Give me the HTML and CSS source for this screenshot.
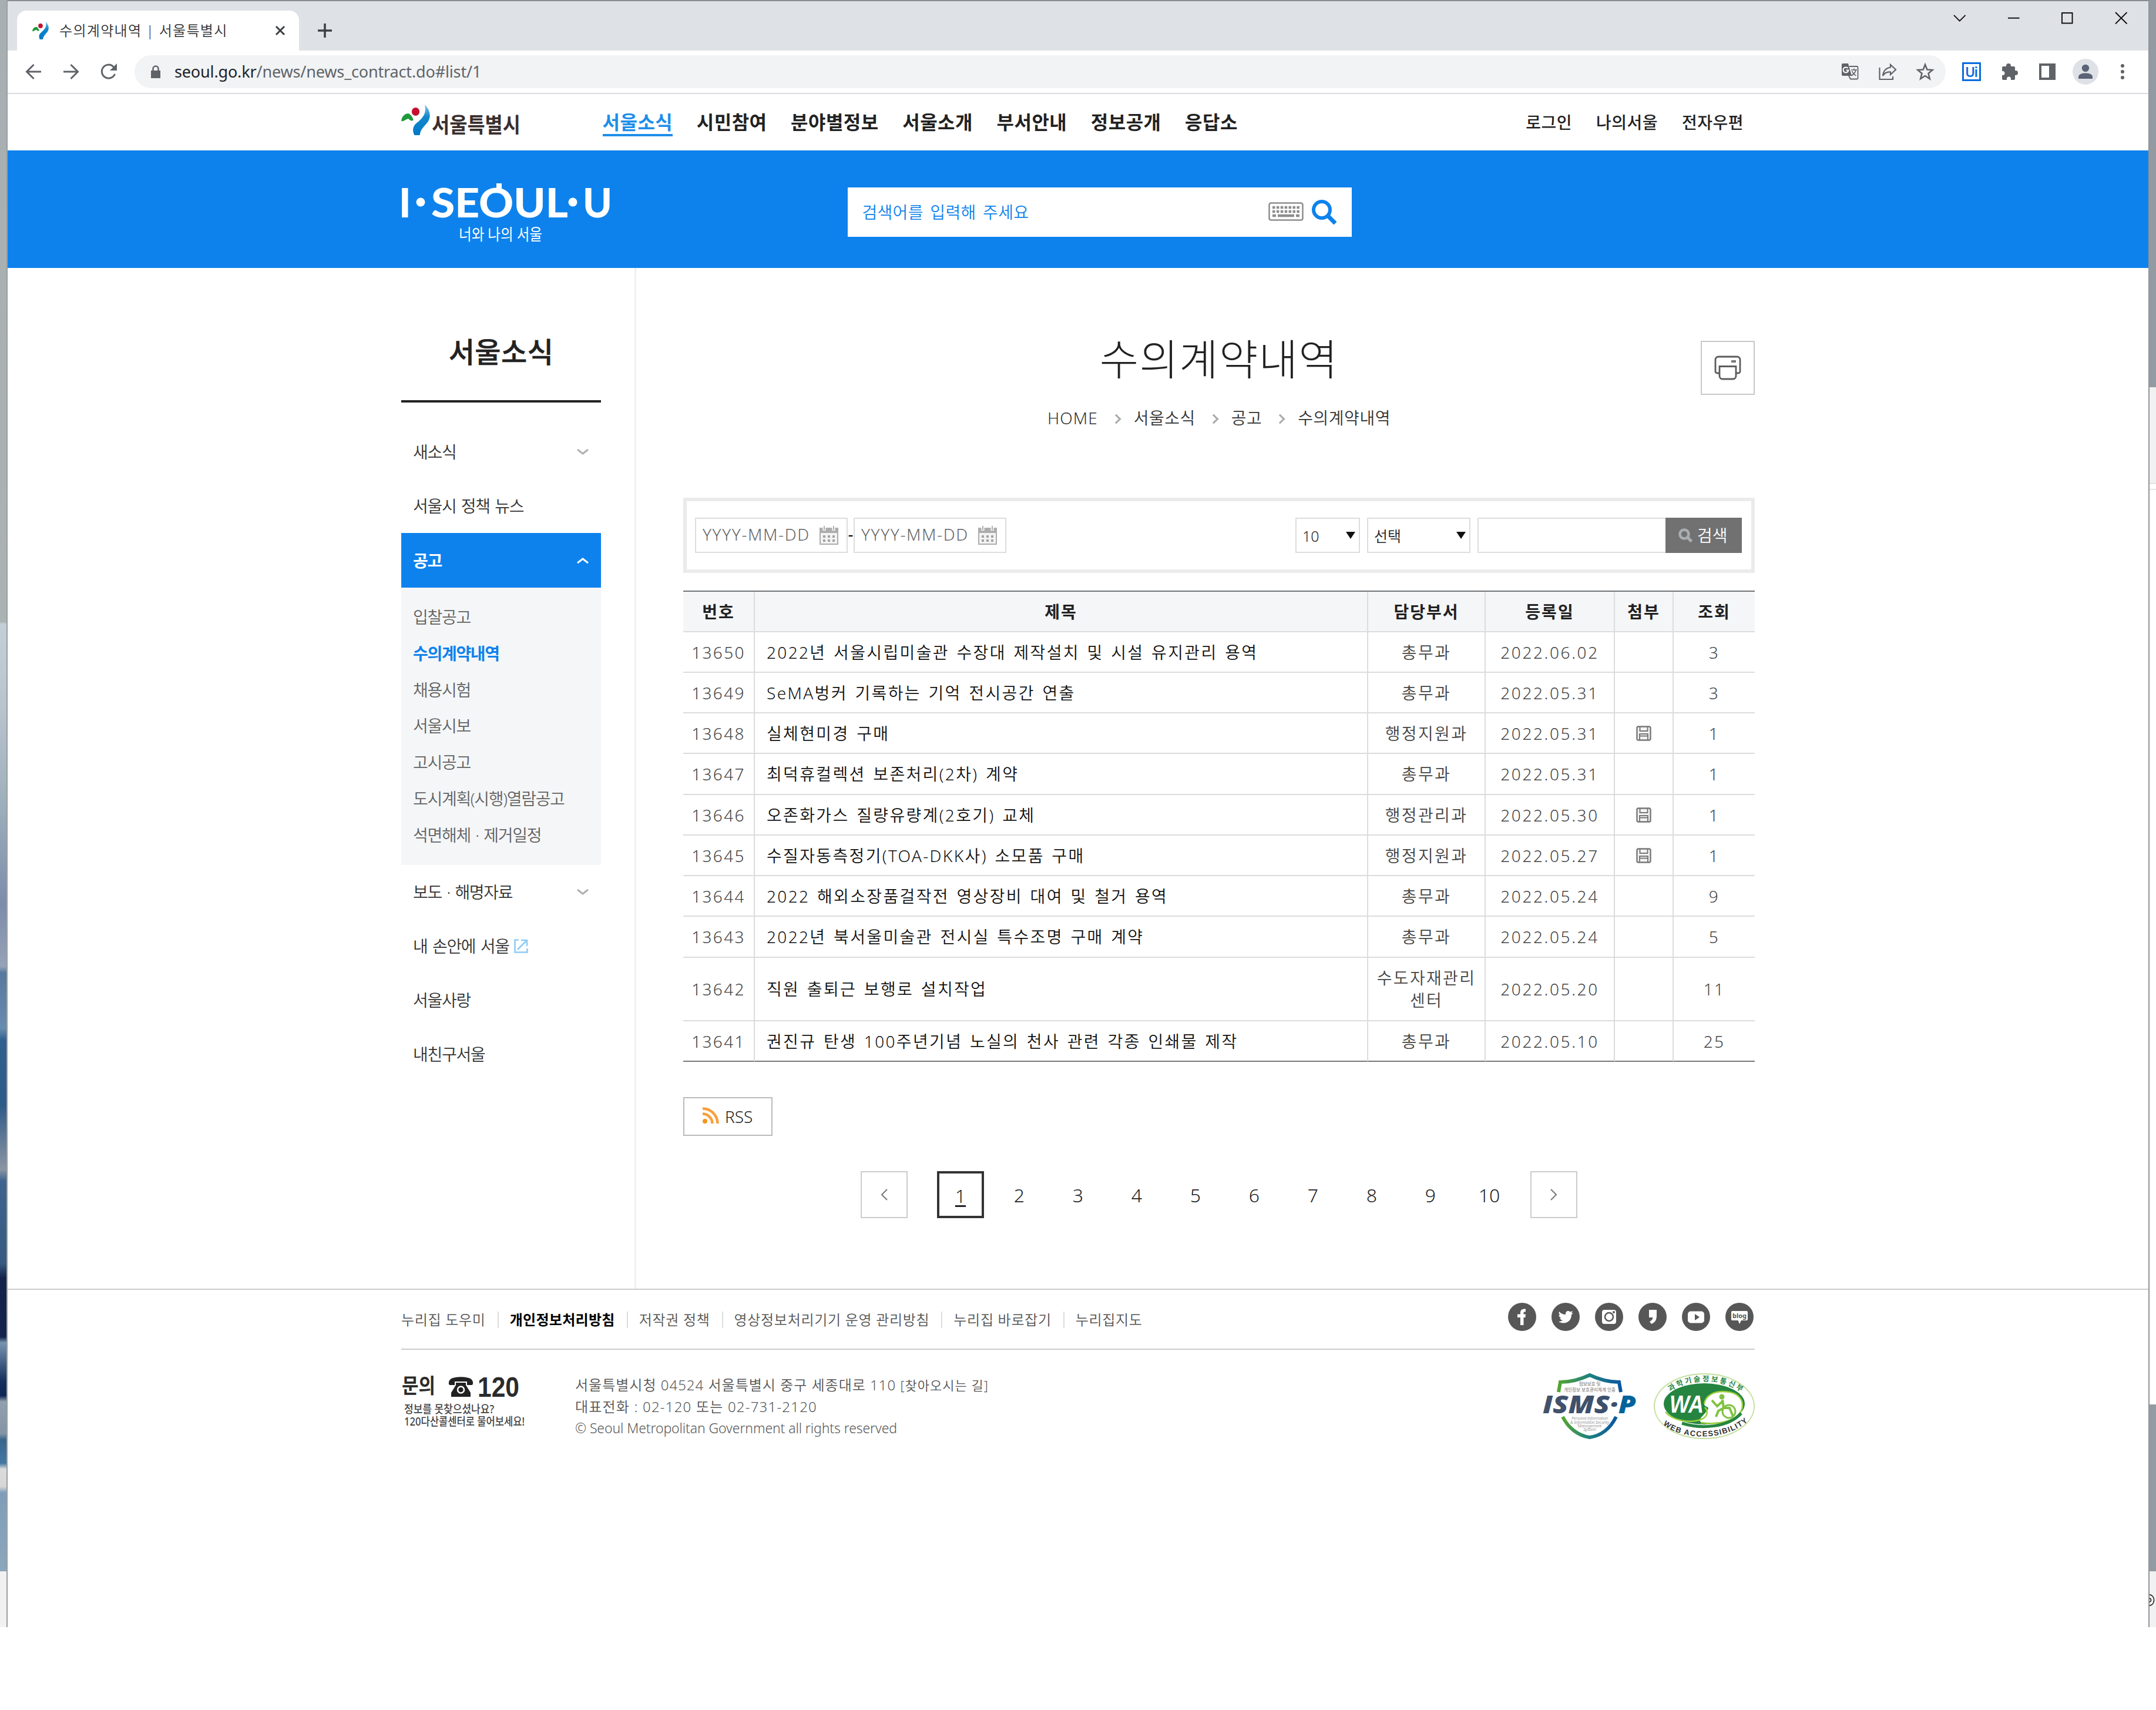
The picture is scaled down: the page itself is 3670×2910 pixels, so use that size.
FILE: index.html
```html
<!DOCTYPE html>
<html lang="ko">
<head>
<meta charset="utf-8">
<title>수의계약내역 | 서울특별시</title>
<link rel="stylesheet" href="styles.css">
</head>
<body>
<svg width="0" height="0" class="defs">
  <defs>
    <linearGradient id="blueSwoosh" x1="0" y1="1" x2="0" y2="0"><stop offset="0" stop-color="#0079c8"/><stop offset=".6" stop-color="#1387cd"/><stop offset="1" stop-color="#8cc6ea"/></linearGradient>
    <linearGradient id="shieldGrad" x1="0" x2="1"><stop offset="0" stop-color="#55a532"/><stop offset=".5" stop-color="#1f8080"/><stop offset="1" stop-color="#0b57a0"/></linearGradient>
    <linearGradient id="ismsGrad" gradientUnits="userSpaceOnUse" x1="0" y1="0" x2="158" y2="0"><stop offset="0" stop-color="#42526b"/><stop offset=".78" stop-color="#3b4f6c"/><stop offset=".82" stop-color="#00639c"/></linearGradient>
  </defs>
  <symbol id="seoulMark" viewBox="0 0 48 52">
    <path d="M39 0C49 10 50 21 44 30C37 39 32 42 31 52H22C18 44 19 37 26 31C36 23 43 14 39 0Z" fill="url(#blueSwoosh)"/>
    <path d="M0 28C1 19 7 15 12 15C18 18 20 24 20 27C17 28 14 27 12 24C9 24 5 29 0 28Z" fill="#1f9a3c"/>
    <ellipse cx="24" cy="12" rx="6.5" ry="7" fill="#c60f2f"/>
  </symbol>
  <symbol id="floppy" viewBox="0 0 26 26">
    <path d="M3 1.5H23L24.5 3V23L23 24.500H3L1.500 23V3Z" fill="#f4f4f4" stroke="#777" stroke-width="2.4"/>
    <path d="M6.500 2V9H19.500V2M6 24V14H20V24M6 17.500H20" fill="none" stroke="#777" stroke-width="2"/>
  </symbol>
  <symbol id="calendar" viewBox="0 0 32 32">
    <path d="M1 4H31V31H1Z" fill="#f3f3f3" stroke="#adadad" stroke-width="2"/>
    <path d="M0 3H32V12H0Z" fill="#adadad"/>
    <path d="M8 0V8M24 0V8" stroke="#fff" stroke-width="5"/><path d="M8 0V7M24 0V7" stroke="#adadad" stroke-width="2"/>
    <path d="M6 18H10M14 18H18M22 18H26M6 25H10M14 25H18M22 25H26" stroke="#a2a2a2" stroke-width="4"/>
  </symbol>
</svg>
<div class="desktop">
  <div class="strip strip-left"></div>
  <div class="window">
    <div class="tabbar">
      <div class="tab">
        <svg class="tab-mark" viewBox="0 0 48 52" preserveAspectRatio="none"><use href="#seoulMark"/></svg>
        <span class="tab-title">수의계약내역 | 서울특별시</span>
        <svg class="tab-close" viewBox="0 0 18 18"><path d="M2 2L16 16M16 2L2 16" stroke="#3c4043" stroke-width="3"/></svg>
      </div>
      <svg class="new-tab" viewBox="0 0 24 24"><path d="M12 0V24M0 12H24" stroke="#3c4043" stroke-width="3.500"/></svg>
      <div class="win-controls">
        <svg viewBox="0 0 22 22"><path d="M1 6L11 16L21 6" fill="none" stroke="#111" stroke-width="2"/></svg>
        <svg viewBox="0 0 22 22"><path d="M1 11H21" stroke="#111" stroke-width="2"/></svg>
        <svg viewBox="0 0 22 22"><path d="M2 2H20V20H2Z" fill="none" stroke="#111" stroke-width="2"/></svg>
        <svg viewBox="0 0 22 22"><path d="M1 1L21 21M21 1L1 21" stroke="#111" stroke-width="2"/></svg>
      </div>
    </div>
    <div class="toolbar">
      <svg class="nav-ic" viewBox="0 0 28 28"><path d="M27 14H3M14.500 2L2.500 14L14.500 26" fill="none" stroke="#5f6368" stroke-width="3"/></svg>
      <svg class="nav-ic" viewBox="0 0 28 28"><path d="M1 14H25M13.500 2L25.500 14L13.500 26" fill="none" stroke="#5f6368" stroke-width="3"/></svg>
      <svg class="nav-ic" viewBox="0 0 28 28"><path d="M24.500 18A11.500 11.500 0 1 1 22 5.500L25 9" fill="none" stroke="#5f6368" stroke-width="3"/><path d="M28 0V12H16Z" fill="#5f6368"/></svg>
      <div class="omnibox">
        <svg class="lock" viewBox="0 0 18 22"><path d="M1 9H17V22H1Z" fill="#5f6368"/><path d="M4.500 9V6A4.500 4.500 0 0 1 13.500 6V9" fill="none" stroke="#5f6368" stroke-width="2.500"/></svg>
        <span class="url"><b>seoul.go.kr</b>/news/news_contract.do#list/1</span>
        <div class="omni-icons">
          <svg viewBox="0 0 30 30"><path d="M14 6H27A1.500 1.500 0 0 1 28.500 7.500V26A1.500 1.500 0 0 1 27 27.500H16L13 22" fill="none" stroke="#5f6368" stroke-width="1.800"/><path d="M3 1H12L18 22H3A2 2 0 0 1 1 20V3A2 2 0 0 1 3 1Z" fill="#5f6368"/><path d="M11.500 9A4.500 4.500 0 1 0 12.500 12.500H8.500" fill="none" stroke="#fff" stroke-width="2"/><path d="M17 12H27M22 9.500V12M25 12C24 17 21 20 17 22M18.500 14C20 18 23 20 25 22" fill="none" stroke="#5f6368" stroke-width="1.600"/></svg>
          <svg viewBox="0 0 30 30"><path d="M1.500 8V28H24V23" fill="none" stroke="#5f6368" stroke-width="2.200"/><path d="M20 3L29 11.500L20 20V15.500C14 15 10 17 7 22C8 13 13 8.500 20 7.500Z" fill="none" stroke="#5f6368" stroke-width="2.200"/></svg>
          <svg viewBox="0 0 30 30"><path d="M15 3L18.400 11.500L27.500 12L20.500 18L22.800 27L15 22L7.200 27L9.500 18L2.500 12L11.600 11.500Z" fill="none" stroke="#5f6368" stroke-width="2.600"/></svg>
        </div>
      </div>
      <div class="ext-icons">
        <svg class="ui" viewBox="0 0 32 32"><path d="M1.500 1.500H30.500V30.500H1.500Z" fill="#fff" stroke="#0a6be0" stroke-width="3"/><text x="16" y="24.500" text-anchor="middle" textLength="22" font-size="23" font-weight="600" fill="#0a6be0">Ui</text></svg>
        <svg viewBox="0 0 30 30"><path d="M2 8A2 2 0 0 1 4 6H9V5A4 4 0 0 1 17 5V6H22A2 2 0 0 1 24 8V13H25A4 4 0 0 1 25 21H24V27A2 2 0 0 1 22 29H17V27A3.500 3.500 0 0 0 10 27V29H4A2 2 0 0 1 2 27V21H3A3.500 3.500 0 0 0 3 14H2Z" fill="#5f6368"/></svg>
        <svg viewBox="0 0 30 30"><path d="M1 1H29V29H1ZM5 5V25H18V5Z" fill="#5f6368" fill-rule="evenodd"/></svg>
        <svg class="avatar" viewBox="0 0 44 44"><circle cx="22" cy="22" r="22" fill="#dee1e6"/><circle cx="22" cy="16" r="6.200" fill="#5a6378"/><path d="M10 34V31C10 26 16 24.500 22 24.500S34 26 34 31V34Z" fill="#5a6378"/></svg>
        <svg class="dots" viewBox="0 0 6 28"><circle cx="3" cy="4" r="3" fill="#5f6368"/><circle cx="3" cy="14" r="3" fill="#5f6368"/><circle cx="3" cy="24" r="3" fill="#5f6368"/></svg>
      </div>
    </div>

    <header class="site-header wrap">
      <div class="logo">
        <svg class="logo-mark" viewBox="0 0 48 52" preserveAspectRatio="none"><use href="#seoulMark"/></svg>
        <svg class="logo-text" viewBox="0 0 152 54"><text x="0" y="47.500" font-size="36" font-weight="700" fill="#3a2f2e" textLength="151" lengthAdjust="spacingAndGlyphs">서울특별시</text></svg>
      </div>
      <nav class="gnb"><a class="on">서울소식</a><a>시민참여</a><a>분야별정보</a><a>서울소개</a><a>부서안내</a><a>정보공개</a><a>응답소</a></nav>
      <nav class="util"><a>로그인</a><a>나의서울</a><a>전자우편</a></nav>
    </header>

    <div class="banner">
      <div class="wrap banner-in">
        <svg class="slogan" viewBox="0 0 360 110">
          <g fill="#fff" font-weight="900" font-size="68" class="slogan-text"><text x="-4" y="60">I</text><text x="51" y="60" textLength="233" lengthAdjust="spacingAndGlyphs">SEOUL</text><text x="309" y="60" textLength="50" lengthAdjust="spacingAndGlyphs">U</text></g>
          <circle cx="33" cy="34" r="7.500" fill="#fff"/><circle cx="292" cy="34" r="7.500" fill="#fff"/><path d="M162 2H171V14H162Z" fill="#fff"/>
          <text x="98" y="99" font-size="27" fill="#fff" textLength="142" lengthAdjust="spacingAndGlyphs">너와 나의 서울</text>
        </svg>
        <div class="search">
          <span>검색어를 입력해 주세요</span>
          <svg class="kbd" viewBox="0 0 60 32"><rect x="1.500" y="1.500" width="57" height="29" rx="3" fill="#fff" stroke="#8d8d8d" stroke-width="2.500"/><path d="M7 9H53M7 16H53" stroke="#8d8d8d" stroke-width="4.500" stroke-dasharray="4.500 2.400"/><path d="M7 23H13M16 23H44M47 23H53" stroke="#8d8d8d" stroke-width="4.500"/></svg>
          <svg class="mag" viewBox="0 0 44 44"><circle cx="18" cy="18" r="14" fill="none" stroke="#0e82ec" stroke-width="6"/><path d="M28 28L41 41" stroke="#0e82ec" stroke-width="7"/></svg>
        </div>
      </div>
    </div>

    <div class="body wrap">
      <aside class="side">
        <h2>서울소식</h2>
        <ul class="lnb">
          <li>새소식<svg class="chev" viewBox="0 0 20 12"><path d="M1 2L10 9L19 2" fill="none" stroke="#b0b0b0" stroke-width="3"/></svg></li>
          <li>서울시 정책 뉴스</li>
          <li class="on">공고<svg class="chev" viewBox="0 0 20 12"><path d="M1 10L10 3L19 10" fill="none" stroke="#fff" stroke-width="3"/></svg></li>
        </ul>
        <ul class="sub"><li>입찰공고</li><li class="on">수의계약내역</li><li>채용시험</li><li>서울시보</li><li>고시공고</li><li>도시계획(시행)열람공고</li><li>석면해체 · 제거일정</li></ul>
        <ul class="lnb">
          <li>보도 · 해명자료<svg class="chev" viewBox="0 0 20 12"><path d="M1 2L10 9L19 2" fill="none" stroke="#b0b0b0" stroke-width="3"/></svg></li>
          <li>내 손안에 서울<svg class="ext" viewBox="0 0 24 24"><path d="M8 1.500H1.500V22.500H22.500V16M6 18L21 3M12 2H22V12" fill="none" stroke="#8fcbf7" stroke-width="2.600"/></svg></li>
          <li>서울사랑</li>
          <li>내친구서울</li>
        </ul>
      </aside>
      <main class="main">
        <div class="title-row">
          <h1>수의계약내역</h1>
          <div class="crumbs"><span class="home">HOME</span><i></i><span>서울소식</span><i></i><span>공고</span><i></i><span>수의계약내역</span></div>
          <div class="print"><svg viewBox="0 0 46 42"><path d="M9 30H5A3 3 0 0 1 2 27V7A5 5 0 0 1 7 2H39A5 5 0 0 1 44 7V27A3 3 0 0 1 41 30H37" fill="none" stroke="#5c5c5c" stroke-width="2.800"/><path d="M9 18.500H37V35A5 5 0 0 1 32 40H14A5 5 0 0 1 9 35Z" fill="#fff" stroke="#5c5c5c" stroke-width="2.800"/><path d="M29 10H37" stroke="#777" stroke-width="4"/></svg></div>
        </div>
        <form class="filter">
          <div class="date"><span>YYYY-MM-DD</span><svg viewBox="0 0 32 32"><use href="#calendar"/></svg></div>
          <em>-</em>
          <div class="date"><span>YYYY-MM-DD</span><svg viewBox="0 0 32 32"><use href="#calendar"/></svg></div>
          <div class="sel sel-n"><span>10</span><b></b></div>
          <div class="sel sel-t"><span>선택</span><b></b></div>
          <div class="kw"></div>
          <div class="go"><svg viewBox="0 0 24 24"><circle cx="10" cy="10" r="7.500" fill="none" stroke="#aaaeb3" stroke-width="4.500"/><path d="M15 15L22.500 22.500" stroke="#aaaeb3" stroke-width="5"/></svg><span>검색</span></div>
        </form>
        <table>
          <colgroup><col class="c1"><col class="c2"><col class="c3"><col class="c4"><col class="c5"><col class="c6"></colgroup>
          <thead><tr><th>번호</th><th>제목</th><th>담당부서</th><th>등록일</th><th>첨부</th><th>조회</th></tr></thead>
          <tbody>
            <tr><td>13650</td><td>2022년 서울시립미술관 수장대 제작설치 및 시설 유지관리 용역</td><td>총무과</td><td>2022.06.02</td><td></td><td>3</td></tr>
            <tr><td>13649</td><td>SeMA벙커 기록하는 기억 전시공간 연출</td><td>총무과</td><td>2022.05.31</td><td></td><td>3</td></tr>
            <tr><td>13648</td><td>실체현미경 구매</td><td>행정지원과</td><td>2022.05.31</td><td><svg viewBox="0 0 26 26"><use href="#floppy"/></svg></td><td>1</td></tr>
            <tr><td>13647</td><td>최덕휴컬렉션 보존처리(2차) 계약</td><td>총무과</td><td>2022.05.31</td><td></td><td>1</td></tr>
            <tr><td>13646</td><td>오존화가스 질량유량계(2호기) 교체</td><td>행정관리과</td><td>2022.05.30</td><td><svg viewBox="0 0 26 26"><use href="#floppy"/></svg></td><td>1</td></tr>
            <tr><td>13645</td><td>수질자동측정기(TOA-DKK사) 소모품 구매</td><td>행정지원과</td><td>2022.05.27</td><td><svg viewBox="0 0 26 26"><use href="#floppy"/></svg></td><td>1</td></tr>
            <tr><td>13644</td><td>2022 해외소장품걸작전 영상장비 대여 및 철거 용역</td><td>총무과</td><td>2022.05.24</td><td></td><td>9</td></tr>
            <tr><td>13643</td><td>2022년 북서울미술관 전시실 특수조명 구매 계약</td><td>총무과</td><td>2022.05.24</td><td></td><td>5</td></tr>
            <tr class="tall"><td>13642</td><td>직원 출퇴근 보행로 설치작업</td><td>수도자재관리<br>센터</td><td>2022.05.20</td><td></td><td>11</td></tr>
            <tr><td>13641</td><td>권진규 탄생 100주년기념 노실의 천사 관련 각종 인쇄물 제작</td><td>총무과</td><td>2022.05.10</td><td></td><td>25</td></tr>
          </tbody>
        </table>
        <a class="rss"><svg viewBox="0 0 28 28"><circle cx="4" cy="24" r="4" fill="#f7931e"/><path d="M0 11.500A16.500 16.500 0 0 1 16.500 28M0 2.500A25.500 25.500 0 0 1 25.500 28" fill="none" stroke="#f7a03a" stroke-width="4.500"/></svg>RSS</a>
        <div class="pager">
          <a class="arrow prev"><svg viewBox="0 0 12 20"><path d="M11 1L2 10L11 19" fill="none" stroke="#777" stroke-width="2"/></svg></a>
          <a class="cur">1</a><a>2</a><a>3</a><a>4</a><a>5</a><a>6</a><a>7</a><a>8</a><a>9</a><a>10</a>
          <a class="arrow next"><svg viewBox="0 0 12 20"><path d="M1 1L10 10L1 19" fill="none" stroke="#777" stroke-width="2"/></svg></a>
        </div>
      </main>
    </div>

    <footer>
      <div class="wrap">
        <div class="foot-top">
          <nav><a>누리집 도우미</a><a class="strong">개인정보처리방침</a><a>저작권 정책</a><a>영상정보처리기기 운영 관리방침</a><a>누리집 바로잡기</a><a>누리집지도</a></nav>
          <div class="sns">
            <svg viewBox="0 0 48 48"><circle cx="24" cy="24" r="24" fill="#575757"/><path d="M21 38V25H16V19.500H21V17C21 12 24 10 30 10.500V15.500C27 15 26.500 16 26.500 18V19.500H30L29.500 25H26.500V38Z" fill="#fff"/></svg>
            <svg viewBox="0 0 48 48"><circle cx="24" cy="24" r="24" fill="#575757"/><path d="M13 15C16 18.500 20 20 24 20C23.500 13.500 29 12.500 32 15.500L36 14L34 18L37 17.500L34 20.500C34 29 28 34.500 20.500 34.500C17 34.500 14 33.500 12 32C15 32 17 31 19 30C16 29.500 15 28 14.500 26H16.500C14 25 12.500 23 12.500 20.500L15 21C12.500 19 12 17 13 15Z" fill="#fff"/></svg>
            <svg viewBox="0 0 48 48"><circle cx="24" cy="24" r="24" fill="#575757"/><rect x="12" y="12" width="24" height="24" rx="4" fill="#fff"/><circle cx="24" cy="24" r="7" fill="none" stroke="#575757" stroke-width="2.500"/><circle cx="32" cy="16" r="2" fill="#575757"/></svg>
            <svg viewBox="0 0 48 48"><circle cx="24" cy="24" r="24" fill="#575757"/><path d="M18 12H31V22C31 29 28 34 22 36L19 32C23 30 24 28 24.500 25H18Z" fill="#fff"/></svg>
            <svg viewBox="0 0 48 48"><circle cx="24" cy="24" r="24" fill="#575757"/><rect x="10" y="14.500" width="28" height="20" rx="5" fill="#fff"/><path d="M22 19L30 24.500L22 30Z" fill="#575757"/></svg>
            <svg viewBox="0 0 48 48"><circle cx="24" cy="24" r="24" fill="#575757"/><path d="M12 14H36Q38 14 38 16V28Q38 30 36 30H27L24 36L21.500 30H12Q10 30 10 28V16Q10 14 12 14Z" fill="#fff"/><text x="24" y="25.500" text-anchor="middle" font-size="11" font-weight="700" fill="#575757" textLength="24">blog</text></svg>
          </div>
        </div>
        <div class="foot-bottom">
          <svg class="call" viewBox="0 0 212 96">
            <g font-weight="700" fill="#2b2b2b"><text x="1" y="34" font-size="35" textLength="57" lengthAdjust="spacingAndGlyphs">문의</text><text x="130" y="39.500" font-size="49" textLength="71" class="num" lengthAdjust="spacingAndGlyphs">120</text></g>
            <path d="M84 10C90 5 113 5 119 10C123 13 123 20 120 20H112V14H91V20H83C80 20 80 13 84 10Z" fill="#222"/><path d="M93 16H110V20L118 33V40H85V33L93 20Z" fill="#222"/><circle cx="101.500" cy="28" r="5.500" fill="none" stroke="#fff" stroke-width="2.500"/>
            <g font-size="19" font-weight="500" fill="#444"><text x="5" y="68" textLength="153" lengthAdjust="spacingAndGlyphs">정보를 못찾으셨나요?</text><text x="5" y="89" textLength="205" lengthAdjust="spacingAndGlyphs">120다산콜센터로 물어보세요!</text></g>
          </svg>
          <address><p class="a1">서울특별시청 04524 서울특별시 중구 세종대로 110 <small>[찾아오시는 길]</small></p><p class="a2">대표전화 : 02-120 또는 02-731-2120</p><p class="a3">© Seoul Metropolitan Government all rights reserved</p></address>
          <div class="marks">
            <svg class="isms" viewBox="0 0 158 112">
              <path d="M26 32L29 15C46 15 62 11 79 3C96 11 112 15 129 15L132 32" fill="none" stroke="url(#shieldGrad)" stroke-width="6"/>
              <path d="M33 74C42 92 58 106 79 109C100 106 115 92 124 74" fill="none" stroke="url(#shieldGrad)" stroke-width="6"/>
              <g fill="#666" font-size="8" text-anchor="middle"><text x="79" y="21" textLength="37">정보보호 및</text><text x="79" y="31" textLength="88" lengthAdjust="spacingAndGlyphs">개인정보 보호관리체계 인증</text></g>
              <text x="-1" y="68" font-size="42" font-weight="800" font-style="italic" class="isms-text" textLength="159" lengthAdjust="spacingAndGlyphs" fill="url(#ismsGrad)">ISMS·P</text>
              <g fill="#666" font-size="7" font-style="italic" text-anchor="middle"><text x="79" y="79" textLength="62">Personal Information</text><text x="79" y="85.500" textLength="66">&amp; Information Security</text><text x="79" y="91.500">Management</text><text x="79" y="97.500">System</text></g>
            </svg>
            <svg class="wa" viewBox="0 0 172 112">
              <defs><path id="arcTop" d="M28 31C60 8 112 8 148 31"/><path id="arcBottom" d="M16 87C50 115 120 115 159 83"/></defs>
              <ellipse cx="86" cy="56" rx="85" ry="55" fill="#fff" stroke="#c4e09e" stroke-width="2"/>
              <ellipse cx="86" cy="52" rx="69" ry="35" fill="#258540"/>
              <path d="M86 52C88 38 102 31 118 31C140 31 151 41 151 54C151 73 128 86 88 84C68 83 84 74 92 62C96 56 86 58 86 52Z" fill="#fff"/>
              <path d="M86 52C88 38 102 31 118 31C140 31 151 41 151 54C151 74 124 90 80 84M20 66C32 80 62 87 84 77C92 72 93 64 87 58" fill="none" stroke="#99cf3a" stroke-width="2.500"/>
              <path d="M48 85C80 95 126 93 149 68" fill="none" stroke="#258540" stroke-width="5"/>
              <text x="27" y="67" font-size="42" font-weight="700" font-style="italic" fill="#fff" textLength="58" lengthAdjust="spacingAndGlyphs" class="num">WA</text>
              <g fill="none" stroke="#7fc241" stroke-width="4"><circle cx="128" cy="65" r="11" stroke-width="3"/><path d="M117 45L119 59H129L135 73M117 48L108 56L99 46M119 59L110 64L106 74"/></g><circle cx="116" cy="40" r="4.500" fill="#7fc241"/>
              <text font-size="12.500" font-weight="600" fill="#258540"><textPath href="#arcTop" textLength="128">과학기술정보통신부</textPath></text>
              <text font-size="13" font-weight="700" fill="#333" class="num"><textPath href="#arcBottom" textLength="154">WEB ACCESSIBILITY</textPath></text>
            </svg>
          </div>
        </div>
      </div>
    </footer>
  </div>
  <div class="strip strip-right"><svg viewBox="0 0 13 24"><path d="M0 1C12 3 12 21 0 23M0 8C4 10 4 14 0 16" fill="none" stroke="#222" stroke-width="2"/></svg></div>
</div>
</body>
</html>
```
FILE: styles.css
```css
* { box-sizing: border-box; }
body { margin: 0; background: #fff; color: #222; font-family: "Noto Sans", "Noto Sans CJK KR", sans-serif; font-size: 28px; line-height: 40px; overflow: hidden; }
ul { list-style: none; margin: 0; padding: 0; }
h1, h2, p { margin: 0; }
svg { display: block; overflow: visible; }
.defs { position: absolute; }
.num { font-family: "Liberation Sans", "Noto Sans CJK KR", sans-serif; }

/* desktop edges visible on both sides of the browser window */
.desktop { display: grid; grid-template-columns: 13px 3644px 13px; height: 2769px; }
.strip-left { border-right: 2px solid #9a9fa1; background: linear-gradient(#a7afb2 0, #abb2b2 1058px, #c3ced8 1062px, #b9c4ce 1200px, #9fb0bd 1360px, #7d8cab 1540px, #95a2b6 1645px, #567a9f 1655px, #688caf 1750px, #2f608f 1770px, #2d5b89 1880px, #8c95a3 1990px, #3d6390 2010px, #375b80 2150px, #15224a 2175px, #14244d 2275px, #7795b0 2285px, #14305e 2350px, #0c2555 2375px, #91a0af 2385px, #8394a5 2440px, #39668f 2450px, #4478a0 2490px, #dcdcdc 2500px, #d6d6d6 2530px, #7f9db8 2540px, #8ba7bc 2674px, #f1f1f1 2674px); }
.strip-right { border-left: 2px solid #90959a; padding-top: 2711px; background: linear-gradient(#939aa2 659px, #f1f1f1 659px, #f1f1f1 822px, #ccc 822px, #fff 824px, #fff 832px, #ccc 832px, #fff 834px, #fff 2390px, #939aa2 2390px, #939aa2 2674px, #f1f1f1 2674px); }
.strip-right svg { width: 11px; height: 24px; }

/* browser chrome */
.window { border-top: 2px solid #888d91; background: #fff; }
.tabbar { height: 84px; background: #dee1e6; display: flex; padding: 16px 0 0 16px; }
.tab { width: 480px; height: 68px; background: #fff; border-radius: 16px 16px 0 0; display: flex; align-items: center; padding: 0 23px 0 26px; }
.tab-mark { width: 28px; height: 30px; }
.tab-title { font-size: 24px; font-weight: 350; letter-spacing: 1.3px; color: #303336; margin-left: 18px; white-space: nowrap; }
.tab-close { width: 18px; height: 18px; margin-left: auto; }
.new-tab { width: 24px; height: 24px; margin: 22px 0 0 32px; }
.win-controls { display: flex; gap: 70px; margin: 2px 36px 0 auto; }
.win-controls svg { width: 21.500px; height: 21.500px; }
.toolbar { height: 74px; border-bottom: 2px solid #dadce0; display: flex; align-items: center; padding-left: 30px; }
.nav-ic { width: 28px; height: 28px; margin-right: 36px; }
.omnibox { width: 3083px; height: 56px; margin-left: -6px; border-radius: 28px; background: #f1f3f4; display: flex; align-items: center; padding: 0 30px 0 27px; }
.lock { width: 18px; height: 22px; }
.url { font-size: 27px; color: #5f6368; margin-left: 23px; white-space: nowrap; letter-spacing: -.15px; }
.url b { font-weight: 400; color: #202124; }
.omni-icons { display: flex; gap: 34px; margin-left: auto; margin-right: -10px; }
.omni-icons svg, .ext-icons svg { width: 30px; height: 30px; }
.ext-icons { display: flex; align-items: center; gap: 34px; padding-left: 28px; }
.ext-icons .ui { width: 32px; height: 32px; }
.ext-icons .avatar { width: 44px; height: 44px; margin-left: -6px; }
.ext-icons .dots { width: 6px; height: 28px; margin-left: 4px; }

/* site header */
.wrap { width: 2304px; margin: 0 auto; }
.site-header { height: 96px; display: flex; }
.logo { width: 206px; margin-top: 18px; display: flex; gap: 3px; }
.logo-mark { width: 49px; height: 52px; }
.logo-text { width: 152px; height: 54px; }
.gnb { display: flex; gap: 40.500px; margin-left: 136.500px; padding-top: 24px; }
.gnb a { height: 48px; line-height: 47px; font-size: 32px; font-weight: 700; letter-spacing: .5px; white-space: nowrap; color: #222; }
.gnb .on { color: #1e8ee9; border-bottom: 4px solid #1e8ee9; }
.util { display: flex; gap: 41px; margin-left: auto; padding: 28px 19px 0 0; font-weight: 500; letter-spacing: .5px; }

.banner { height: 200px; background: #0e82ec; }
.banner-in { display: flex; }
.slogan { width: 360px; height: 110px; margin-top: 54px; }
.slogan-text { font-family: Lato, "Open Sans", sans-serif; }
.search { width: 858px; height: 84px; background: #fff; margin: 63px 0 0 399.500px; display: flex; align-items: center; padding: 0 25px; color: #0e82ec; font-weight: 350; }
.search span { flex: 1; letter-spacing: .3px; word-spacing: 4px; }
.kbd { width: 60px; height: 32px; margin: -2px 13px 0 0; }
.mag { width: 44px; height: 44px; }

/* side menu */
.body { display: flex; height: 1737px; font-weight: 350; }
.side { width: 400px; border-right: 3px solid #f0f0f0; padding-right: 57px; }
.side h2 { height: 229px; border-bottom: 4px solid #222; font-size: 48px; font-weight: 500; line-height: 60px; padding-top: 113px; text-align: center; margin-bottom: 38px; letter-spacing: .5px; -webkit-text-stroke: .6px #222; }
.lnb li { height: 92px; padding: 0 20px; display: flex; align-items: center; letter-spacing: -1.300px; word-spacing: 2.500px; color: #333; }
.lnb .on { background: #0e82ec; color: #fff; font-weight: 700; height: 93px; }
.chev { width: 20px; height: 12px; margin-left: auto; margin-right: 1px; }
.ext { width: 24px; height: 24px; margin-left: 8px; }
.sub { background: #f4f6f8; padding: 20px; height: 472px; }
.sub li { height: 61.800px; line-height: 61.800px; letter-spacing: -1.300px; word-spacing: 2.500px; color: #626262; white-space: nowrap; }
.sub .on { color: #0e82ec; font-weight: 700; }

/* content */
.main { width: 1824px; margin-left: 80px; }
.title-row { height: 391px; position: relative; padding-top: 110px; text-align: center; }
h1 { font-size: 72px; line-height: 88px; font-weight: 300; letter-spacing: 1.500px; color: #222; }
.crumbs { display: flex; justify-content: center; margin-top: 37px; color: #333; letter-spacing: .5px; }
.crumbs i { width: 12px; height: 12px; border: solid #aaa; border-width: 3px 3px 0 0; transform: rotate(45deg); margin: 16px 24px 0 25px; }
.crumbs .home { letter-spacing: 1px; }
.print { position: absolute; right: 0; top: 124px; width: 92px; height: 92px; border: 2px solid #c8c8c8; display: grid; place-items: center; }
.print svg { width: 46px; height: 42px; }

.filter { height: 128px; border: 6px solid #ebebeb; display: flex; padding: 28px 16px 0 14px; }
.date { width: 260px; height: 60px; border: 2px solid #ddd; display: flex; align-items: center; padding: 0 0 4px 11px; color: #666; }
.date span { width: 199px; letter-spacing: 1.600px; white-space: nowrap; }
.date svg { width: 32px; height: 32px; margin-top: 4px; }
.filter em { width: 10px; font-style: normal; text-align: center; line-height: 54px; color: #000; font-weight: 400; }
.sel { height: 60px; border: 2px solid #ddd; display: flex; align-items: center; padding: 2px 6px 0 10px; font-size: 25px; color: #222; }
.sel b { border: solid transparent; border-width: 12px 8px 0; border-top-color: #111; margin-left: auto; margin-top: -3px; }
.sel-n { width: 110px; margin-left: auto; }
.sel-t { width: 176px; margin-left: 12px; }
.kw { width: 320px; height: 60px; border: 2px solid #ddd; margin-left: 12px; border-right: 0; }
.go { width: 130px; height: 60px; background: #717171; color: #fff; display: flex; align-items: center; padding-left: 22px; }
.go svg { width: 24px; height: 24px; margin-right: 8px; }

table { width: 1824px; table-layout: fixed; border-collapse: separate; border-spacing: 0; margin-top: 30px; border-top: 2px solid #717375; font-weight: 350; }
.c1 { width: 122px; } .c2 { width: 1044px; } .c3 { width: 200px; } .c4 { width: 220px; } .c5 { width: 100px; } .c6 { width: 138px; }
th, td { height: 69px; padding: 0; border: solid #dcdcdc; border-width: 0 2px 2px 0; text-align: center; letter-spacing: 2.350px; vertical-align: middle; color: #444; white-space: nowrap; line-height: 38px; }
th { background: #f4f6f8; font-weight: 600; color: #222; letter-spacing: 2px; }
th:last-child, td:last-child { border-right: 0; }
td:nth-child(2) { text-align: left; padding-left: 20px; color: #111; word-spacing: 3px; }
td:nth-child(4) { letter-spacing: 2.600px; }
tbody tr:nth-child(4n) td { height: 70px; }
tbody tr.tall td { height: 108px; }
tbody tr:last-child td { border-bottom-color: #777; }
td svg { width: 26px; height: 26px; margin: 0 auto; }

.rss { display: flex; align-items: center; width: 152px; height: 66px; margin-top: 60px; border: 2px solid #bbb; padding-left: 31px; color: #222; }
.rss svg { width: 28px; height: 28px; margin-right: 10px; margin-top: -4px; }
.pager { display: flex; gap: 20px; margin-top: 60px; padding-left: 302px; }
.pager a { width: 80px; height: 80px; line-height: 82px; text-align: center; font-size: 32px; color: #222; }
.pager .cur { border: 4px solid #333; line-height: 76px; text-decoration: underline; text-underline-offset: 4px; }
.pager .arrow { border: 2px solid #ccc; display: grid; place-items: center; }
.pager .arrow svg { width: 12px; height: 20px; }
.pager .prev { margin-right: 30px; }
.pager .next { margin-left: 10px; }

/* footer */
footer { border-top: 2px solid #ccc; font-size: 24px; color: #555; font-weight: 350; }
.foot-top { height: 102px; display: flex; border-bottom: 2px solid #ccc; }
.foot-top nav { display: flex; align-items: center; height: 101px; }
.foot-top nav a { padding-right: 20px; border-right: 2px solid #ddd; margin-right: 19px; line-height: 28px; white-space: nowrap; letter-spacing: .7px; }
.foot-top nav a:last-child { border: 0; }
.foot-top nav .strong { color: #000; font-weight: 700; letter-spacing: .3px; }
.sns { display: flex; gap: 26px; margin: 22px 2px 0 auto; }
.sns svg { width: 48px; height: 48px; }
.foot-bottom { display: flex; height: 152px; padding-top: 40px; }
.call { width: 212px; height: 96px; }
address { font-style: normal; margin-left: 84px; line-height: 36.500px; white-space: nowrap; padding-top: 2px; }
address small { font-size: 22px; }
.a1 { letter-spacing: 1px; }
.a2 { letter-spacing: 1.200px; }
.a3 { font-size: 23px; letter-spacing: -.1px; }
.marks { display: flex; gap: 30px; margin-left: auto; }
.isms { width: 158px; height: 112px; }
.isms-text { font-family: "Open Sans", sans-serif; }
.wa { width: 172px; height: 112px; }
```
